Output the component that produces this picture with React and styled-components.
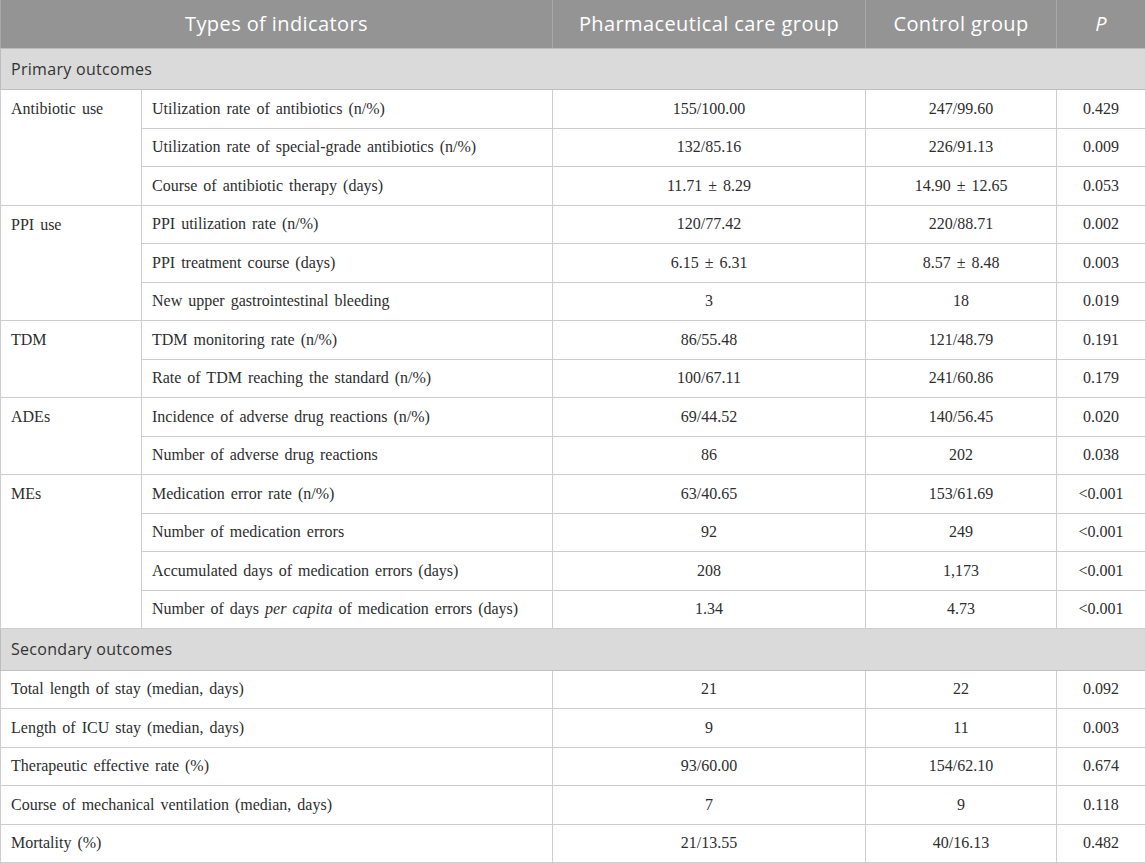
import React from "react";
import styled, { createGlobalStyle } from "styled-components";

const GlobalStyle = createGlobalStyle`
  html, body {
    margin: 0;
    padding: 0;
    background: #ffffff;
  }
`;

const groups = [
  {
    title: "Primary outcomes",
    blocks: [
      {
        name: "Antibiotic use",
        rows: [
          ["Utilization rate of antibiotics (n/%)", "155/100.00", "247/99.60", "0.429"],
          ["Utilization rate of special-grade antibiotics (n/%)", "132/85.16", "226/91.13", "0.009"],
          ["Course of antibiotic therapy (days)", "11.71 ± 8.29", "14.90 ± 12.65", "0.053"],
        ],
      },
      {
        name: "PPI use",
        rows: [
          ["PPI utilization rate (n/%)", "120/77.42", "220/88.71", "0.002"],
          ["PPI treatment course (days)", "6.15 ± 6.31", "8.57 ± 8.48", "0.003"],
          ["New upper gastrointestinal bleeding", "3", "18", "0.019"],
        ],
      },
      {
        name: "TDM",
        rows: [
          ["TDM monitoring rate (n/%)", "86/55.48", "121/48.79", "0.191"],
          ["Rate of TDM reaching the standard (n/%)", "100/67.11", "241/60.86", "0.179"],
        ],
      },
      {
        name: "ADEs",
        rows: [
          ["Incidence of adverse drug reactions (n/%)", "69/44.52", "140/56.45", "0.020"],
          ["Number of adverse drug reactions", "86", "202", "0.038"],
        ],
      },
      {
        name: "MEs",
        rows: [
          ["Medication error rate (n/%)", "63/40.65", "153/61.69", "<0.001"],
          ["Number of medication errors", "92", "249", "<0.001"],
          ["Accumulated days of medication errors (days)", "208", "1,173", "<0.001"],
          [
            <>
              Number of days <em>per capita</em> of medication errors (days)
            </>,
            "1.34",
            "4.73",
            "<0.001",
          ],
        ],
      },
    ],
  },
  {
    title: "Secondary outcomes",
    flat: [
      ["Total length of stay (median, days)", "21", "22", "0.092"],
      ["Length of ICU stay (median, days)", "9", "11", "0.003"],
      ["Therapeutic effective rate (%)", "93/60.00", "154/62.10", "0.674"],
      ["Course of mechanical ventilation (median, days)", "7", "9", "0.118"],
      ["Mortality (%)", "21/13.55", "40/16.13", "0.482"],
    ],
  },
];

const App = () => (
  <>
    <GlobalStyle />
    <Table>
      <colgroup>
        <col style={{ width: 141 }} />
        <col style={{ width: 411 }} />
        <col style={{ width: 313 }} />
        <col style={{ width: 191 }} />
        <col style={{ width: 89 }} />
      </colgroup>
      <thead>
        <tr>
          <HeadCell colSpan={2}>Types of indicators</HeadCell>
          <HeadCell>Pharmaceutical care group</HeadCell>
          <HeadCell>Control group</HeadCell>
          <HeadCell>
            <i>P</i>
          </HeadCell>
        </tr>
      </thead>
      <tbody>
        {groups.map((group) => (
          <React.Fragment key={group.title}>
            <tr>
              <SectionCell colSpan={5}>{group.title}</SectionCell>
            </tr>
            {group.blocks &&
              group.blocks.map((block) =>
                block.rows.map((row, i) => (
                  <tr key={block.name + i}>
                    {i === 0 && (
                      <LabelCell rowSpan={block.rows.length}>{block.name}</LabelCell>
                    )}
                    <Cell>{row[0]}</Cell>
                    <Cell $center>{row[1]}</Cell>
                    <Cell $center>{row[2]}</Cell>
                    <Cell $center>{row[3]}</Cell>
                  </tr>
                ))
              )}
            {group.flat &&
              group.flat.map((row, i) => (
                <tr key={group.title + i}>
                  <Cell colSpan={2}>{row[0]}</Cell>
                  <Cell $center>{row[1]}</Cell>
                  <Cell $center>{row[2]}</Cell>
                  <Cell $center>{row[3]}</Cell>
                </tr>
              ))}
          </React.Fragment>
        ))}
      </tbody>
    </Table>
  </>
);

const Table = styled.table`
  width: 1145px;
  table-layout: fixed;
  border-collapse: collapse;
  border-left: 1px solid #bdbdbd;
  border-right: 1px solid #bdbdbd;
`;

const HeadCell = styled.th`
  height: 48px;
  padding: 0 10px;
  background: #949494;
  color: #ffffff;
  font-family: "Open Sans", "Noto Sans", sans-serif;
  font-size: 20px;
  letter-spacing: 0.4px;
  font-weight: 400;
  text-align: center;
  vertical-align: middle;
  border-left: 1px solid #a8a8a8;
  border-bottom: 1px solid #bcbcbc;
  box-sizing: border-box;
`;

const SectionCell = styled.td`
  height: 41.5px;
  padding: 0 10px;
  background: #d9dad9;
  color: #333333;
  font-family: "Open Sans", "Noto Sans", sans-serif;
  font-size: 16px;
  letter-spacing: 0.3px;
  text-align: left;
  vertical-align: middle;
  border-bottom: 1px solid #bfbfbf;
  box-sizing: border-box;
`;

const Cell = styled.td`
  height: 38.5px;
  padding: 0 10px;
  color: #2e2e2e;
  font-family: "Liberation Serif", "Times New Roman", serif;
  font-size: 16px;
  word-spacing: 2px;
  text-align: ${(p) => (p.$center ? "center" : "left")};
  vertical-align: middle;
  border: 1px solid #cdcdcd;
  box-sizing: border-box;
  white-space: nowrap;
`;

const LabelCell = styled(Cell)`
  vertical-align: top;
  padding-top: 10px;
`;

export default App;
